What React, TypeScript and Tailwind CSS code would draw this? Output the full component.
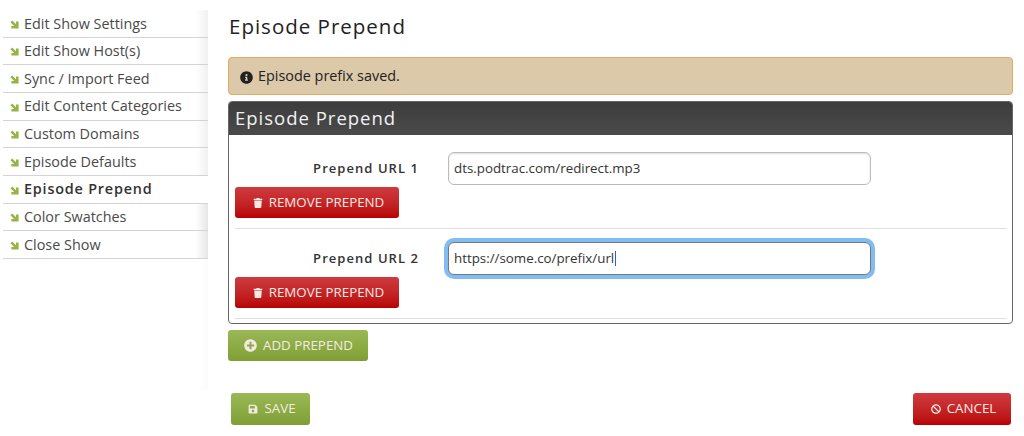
import { FaBan, FaInfoCircle, FaPlusCircle, FaSave, FaTrash } from "react-icons/fa";
import type { ReactNode } from "react";

const menu = [
  "Edit Show Settings",
  "Edit Show Host(s)",
  "Sync / Import Feed",
  "Edit Content Categories",
  "Custom Domains",
  "Episode Defaults",
  "Episode Prepend",
  "Color Swatches",
  "Close Show",
];

function CornerArrow() {
  return (
    <svg viewBox="0 0 9 9" className="mr-[5px] mt-[2px] size-[9px] shrink-0 text-[#94b444]" fill="currentColor">
      <path d="M0.4 2.2 L2.2 0.4 L6 4.2 L6 1.6 L8.6 1.6 L8.6 8.6 L1.4 8.6 L1.4 6 L4.2 6 Z" />
    </svg>
  );
}

function Button({ color, icon, children, className }: { color: "red" | "green"; icon: ReactNode; children: ReactNode; className: string }) {
  const bg =
    color === "red"
      ? "bg-gradient-to-b from-[#cf3a3f] to-[#b80000]"
      : "bg-gradient-to-b from-[#9ab955] to-[#7f9f35]";
  return (
    <button className={`flex items-center justify-center gap-[6px] rounded-[3px] pl-[3px] text-[13.33px] text-[#f6e9e4] ${bg} ${className}`}>
      {icon}
      <span>{children}</span>
    </button>
  );
}

function PrependRow({ label, value, focused }: { label: string; value: string; focused?: boolean }) {
  return (
    <div className="h-[77px] border-b border-[#e2dfe0]">
      <div className="flex items-center">
        <div className="w-[184px] text-right text-[13px] font-semibold tracking-[1.05px] text-[#333]">{label}</div>
        <div
          className={`ml-[29px] flex h-[33px] w-[423px] items-center rounded-[6px] bg-white pl-[5px] text-[13.33px] text-[#333] ${
            focused ? "border border-[#777] shadow-[0_0_0_4px_#82bcf5]" : "border border-[#bbb] shadow-[inset_0_1px_2px_#ddd]"
          }`}
        >
          {value}
          {focused && <span className="ml-px h-[15px] w-px bg-[#2a5fd8]" />}
        </div>
      </div>
      <Button color="red" className="mt-[2px] h-[31px] w-[164px]" icon={<FaTrash className="size-[10px]" />}>
        REMOVE PREPEND
      </Button>
    </div>
  );
}

export default function App() {
  return (
    <div className="flex h-[436px] w-[1024px] overflow-hidden bg-white font-['Open_Sans',sans-serif] text-[#333]">
      <aside className="w-[228px] shrink-0 pl-[3px] pt-[10px]">
        <ul className="w-[205px]">
          {menu.map((item, i) => (
            <li
              key={item}
              className={`flex h-[27.67px] items-center border-b border-[#d4d4d4] pl-[7px] text-[14.4px] text-[#4a4a4a] ${
                i > 6
                  ? "bg-gradient-to-r from-white from-[94%] to-[#e6e6e6]"
                  : i < 6
                    ? "bg-gradient-to-r from-white from-[94%] to-[#f1f1f1]"
                    : ""
              }`}
            >
              <CornerArrow />
              <span className={item === "Episode Prepend" ? "font-semibold tracking-[0.8px] text-[#333]" : ""}>{item}</span>
            </li>
          ))}
        </ul>
        <div className="h-[130px] w-[205px] bg-gradient-to-r from-white from-[96%] to-[#fbfbfb]" />
      </aside>
      <main className="w-[785px] shrink-0">
        <h1 className="mt-[12px] h-[31px] pl-px text-[20.5px] leading-[28px] tracking-[1px] text-[#222]">Episode Prepend</h1>
        <div className="mt-[14px] flex h-[38px] items-center gap-[5px] rounded-[4px] border border-[#e5ab5e] bg-[#dbc9aa] pl-[11px] text-[14.4px] text-[#222]">
          <FaInfoCircle className="mt-[2px] size-[13px]" />
          Episode prefix saved.
        </div>
        <section className="mt-[6px] h-[223px] overflow-hidden rounded-[4px] border border-[#666]">
          <div className="flex h-[33px] items-center bg-gradient-to-b from-[#3d3d3d] to-[#4a4a4a] pb-px pl-[6px] text-[18.5px] tracking-[1px] text-[#f2f2f2]">
            Episode Prepend
          </div>
          <div className="pl-[6px] pr-[5px] pt-[17px]">
            <PrependRow label="Prepend URL 1" value="dts.podtrac.com/redirect.mp3" />
            <div className="pt-[13px]">
              <PrependRow label="Prepend URL 2" value="https://some.co/prefix/url" focused />
            </div>
          </div>
        </section>
        <Button color="green" className="mt-[6px] h-[31px] w-[140px] pl-px" icon={<FaPlusCircle className="size-[13px]" />}>
          ADD PREPEND
        </Button>
        <div className="mt-[32px] flex items-center justify-between pl-[3px] pr-[2px]">
          <Button color="green" className="h-[32px] w-[79px]" icon={<FaSave className="size-[10px]" />}>
            SAVE
          </Button>
          <Button color="red" className="h-[32px] w-[98px]" icon={<FaBan className="size-[10px]" />}>
            CANCEL
          </Button>
        </div>
      </main>
    </div>
  );
}
